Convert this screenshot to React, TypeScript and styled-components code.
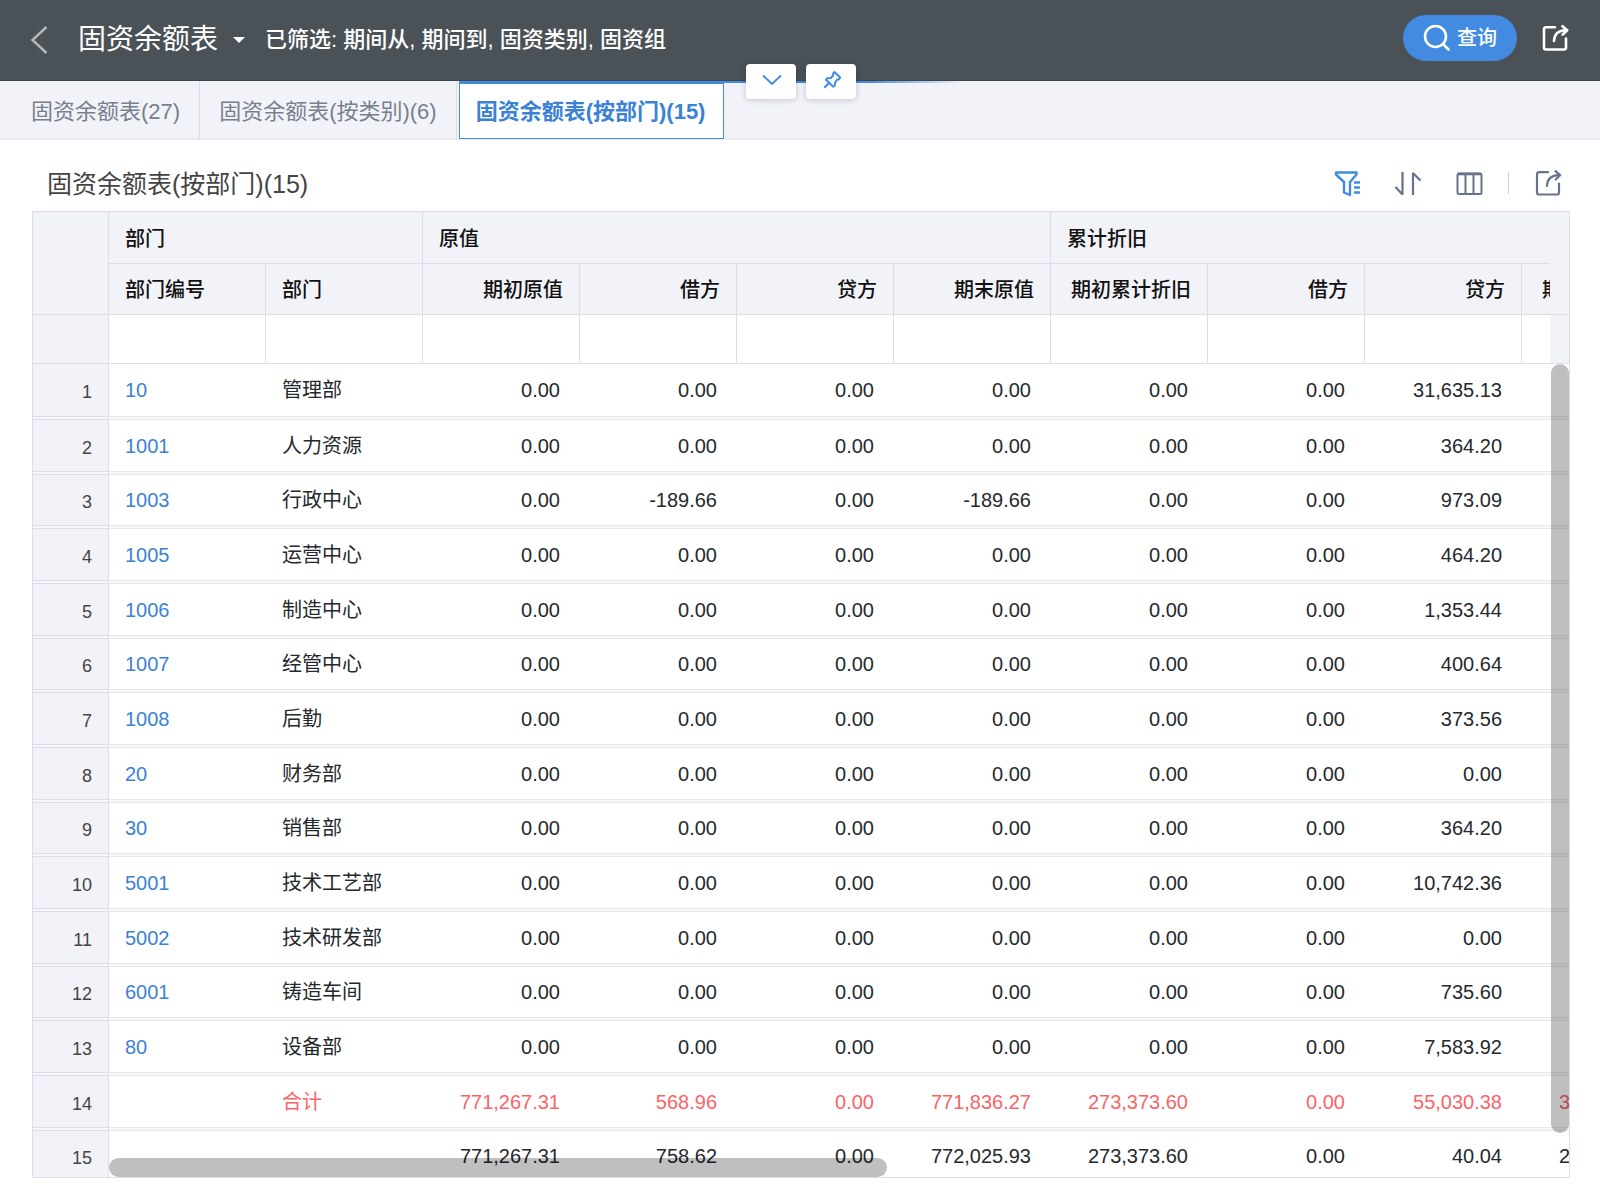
import React from 'react';
import styled, { createGlobalStyle, css } from 'styled-components';

const color = {
  bar: '#4a5157',
  blue: '#428be0',
  link: '#3b82d6',
  panel: '#f2f3f8',
  line: '#dcdde7',
  rowLine: '#e9e9ea',
  rowGap: '#f8f8f8',
  text: '#24292e',
  icon: '#66738a',
  red: '#fb6467',
};

const GlobalStyle = createGlobalStyle`
  * { box-sizing: border-box; }
  body {
    margin: 0;
    background: #fff;
    color: ${color.text};
    font-family: "Liberation Sans", "Noto Sans CJK SC", sans-serif;
    font-size: 20px;
  }
  button, input { font: inherit; color: inherit; }
`;

const Page = styled.div`
  display: flex;
  flex-direction: column;
  height: 100vh;
`;

const bareButton = css`
  display: inline-flex;
  align-items: center;
  justify-content: center;
  padding: 0;
  border: 0;
  background: none;
  cursor: pointer;
`;

const TopBar = styled.header`
  position: relative;
  display: flex;
  align-items: center;
  height: 81px;
  padding: 0 31px 0 30px;
  background: ${color.bar};
  border-bottom: 1px solid #3d444b;
  color: #fff;
  flex-shrink: 0;
`;

const BackButton = styled.button`
  ${bareButton}
  width: 20px;
  height: 28px;
  margin-right: 28px;
  color: #b3b7ba;
`;

const TitleButton = styled.button`
  ${bareButton}
  gap: 15px;
  font-size: 28px;
  line-height: 36px;
`;

const Title = styled.h1`
  margin: 0;
  font-size: 28px;
  font-weight: 400;
`;

const Caret = styled.span`
  border: 6px solid transparent;
  border-top-color: #fff;
  border-bottom-width: 0;
`;

const FilterSummary = styled.p`
  flex: 1;
  margin: 0 0 0 20px;
  font-size: 22px;
  line-height: 32px;
  font-weight: 500;
`;

const Actions = styled.div`
  display: flex;
  align-items: center;
  gap: 24px;
  padding-bottom: 4px;
`;

const QueryButton = styled.button`
  ${bareButton}
  gap: 6px;
  width: 114px;
  height: 46px;
  border-radius: 23px;
  background: ${color.blue};
  font-weight: 500;
`;

const QueryLabel = styled.span`
  padding-bottom: 3px;
`;

const IconButton = styled.button<{ $active?: boolean }>`
  ${bareButton}
  width: 28px;
  height: 28px;
  color: ${(p) => (p.$active ? color.blue : 'inherit')};
`;

const PanelHandles = styled.div`
  position: absolute;
  z-index: 2;
  bottom: -19px;
  left: calc(50% + 1px);
  display: flex;
  gap: 10px;
  transform: translateX(-50%);
`;

const Handle = styled.button`
  ${bareButton}
  width: 50px;
  height: 35px;
  padding: 0 0 4px 2px;
  border-radius: 4px;
  background: #fff;
  color: ${color.blue};
  box-shadow: 0 1px 6px rgba(0, 0, 0, 0.2);
`;

const Tabs = styled.nav`
  display: flex;
  height: 59px;
  background: ${color.panel};
  box-shadow: inset 0 -2px 2px #e9eaef;
  font-size: 22px;
  flex-shrink: 0;
  &::after {
    content: '';
    width: 240px;
    height: 2px;
    background: linear-gradient(to right, ${color.blue} 60%, transparent);
  }
`;

const Tab = styled.button<{ $active?: boolean; $first?: boolean }>`
  ${bareButton}
  padding: 0 19px 4px ${(p) => (p.$first ? 31 : 19)}px;
  border-right: 1px solid ${color.line};
  color: #76808f;
  white-space: nowrap;
  ${(p) =>
    p.$active &&
    css`
      margin: 0 0 1px 2px;
      padding: 0 18px 4px 16px;
      border: 1px solid ${color.blue};
      border-top-width: 3px;
      background: #fff;
      color: ${color.link};
      font-weight: 700;
    `}
`;

const Content = styled.main`
  display: flex;
  flex: 1;
  flex-direction: column;
  min-height: 0;
  padding: 0 30px 22px 32px;
`;

const SectionHead = styled.div`
  display: flex;
  align-items: center;
  height: 71px;
  padding: 16px 8px 0 15px;
  flex-shrink: 0;
`;

const SectionTitle = styled.h2`
  flex: 1;
  margin: 0;
  font-size: 25px;
  line-height: 36px;
  font-weight: 400;
  color: #444;
`;

const Tools = styled.div`
  display: flex;
  align-items: center;
  gap: 33px;
  padding-bottom: 2px;
  color: ${color.icon};
`;

const Divider = styled.span`
  width: 1px;
  height: 22px;
  margin: 0 -8px;
  background: #ccd0d6;
`;

const GridFrame = styled.section`
  position: relative;
  flex: 1;
  min-height: 0;
  overflow: hidden;
  border: 1px solid ${color.line};
`;

const Scroller = styled.div`
  height: 100%;
  overflow: auto;
  scrollbar-width: none;
`;

const Table = styled.table`
  width: 1646px;
  table-layout: fixed;
  border-collapse: separate;
  border-spacing: 0;
  th, td { padding: 0; }
`;

const NumberCol = styled.col`
  width: 76px;
`;

const HeadRow = styled.tr<{ $height: number }>`
  height: ${(p) => p.$height}px;
`;

const HeadCell = styled.th<{ $right?: boolean }>`
  && { padding: 2px 16px 0; }
  border-right: 1px solid ${color.line};
  border-bottom: 1px solid ${color.line};
  background: ${color.panel};
  font-weight: 500;
  line-height: 28px;
  text-align: ${(p) => (p.$right ? 'right' : 'left')};
  white-space: nowrap;
  color: #111;
`;

const FilterCell = styled.td`
  border-right: 1px solid ${color.line};
  border-bottom: 1px solid ${color.line};
`;

const FilterInput = styled.input`
  display: block;
  width: 100%;
  height: 48px;
  padding: 0 16px;
  border: 0;
  outline: 0;
  background: #fff;
`;

const BodyRow = styled.tr<{ $total?: boolean }>`
  height: 55px;
  color: ${(p) => (p.$total ? color.red : 'inherit')};
  &:first-child { height: 56px; }
  &:nth-child(3n) { height: 54px; }
`;

const RowNumber = styled.th`
  && { padding: 1px 16px 0 0; }
  border-right: 1px solid ${color.line};
  background: ${color.panel};
  box-shadow: inset 0 -1px ${color.line}, inset 0 -3px #f6f7fa, inset 0 -4px ${color.line};
  font-size: 18px;
  font-weight: 400;
  text-align: right;
  color: #444;
`;

const Cell = styled.td<{ $right?: boolean }>`
  && { padding: 0 ${(p) => (p.$right ? 20 : 16)}px 4px; }
  box-shadow: inset 0 -1px ${color.rowLine}, inset 0 -3px ${color.rowGap}, inset 0 -4px ${color.rowLine};
  line-height: 28px;
  text-align: ${(p) => (p.$right ? 'right' : 'left')};
  white-space: nowrap;
`;

const CodeLink = styled.a`
  color: ${color.link};
  text-decoration: none;
`;

const HeaderGutter = styled.div`
  position: absolute;
  top: 0;
  right: 0;
  width: 19px;
  height: 152px;
  border-bottom: 1px solid ${color.line};
  background: linear-gradient(${color.line}, ${color.line}) 0 102px / 100% 1px no-repeat ${color.panel};
`;

const VerticalThumb = styled.div`
  position: absolute;
  top: 152px;
  right: 0;
  bottom: 44px;
  width: 18px;
  border-radius: 9px;
  background: rgba(0, 0, 0, 0.25);
`;

const HorizontalThumb = styled.div`
  position: absolute;
  bottom: 0;
  left: 76px;
  width: calc(50% + 10px);
  height: 19px;
  border-radius: 10px;
  background: rgba(0, 0, 0, 0.25);
`;

const ExportIcon = ({ weight = 2.2 }: { weight?: number }) => (
  <svg width="28" height="28" viewBox="0 0 28 28" fill="none" stroke="currentColor" strokeWidth={weight} strokeLinecap="round" strokeLinejoin="round" aria-hidden="true">
    <path d="M14 3.200H5a2 2 0 0 0-2 2v18.300a2 2 0 0 0 2 2h18a2 2 0 0 0 2-2V14.500" />
    <path d="M13 17c.2-6.500 4-10.500 11.500-10.800" />
    <path d="M21.500 2.200l4.700 4-4.500 4.300" />
  </svg>
);

const FilterIcon = () => (
  <svg width="28" height="28" viewBox="0 0 28 28" fill="none" stroke="currentColor" strokeWidth="2.400" strokeLinejoin="round" aria-hidden="true">
    <path d="M3 3.500h20.500v2L17 13v13l-6-2.500V13L3 5.500z" />
    <path d="M21 13.500h6M21 18.500h6M21 23.500h6" />
  </svg>
);

const SortIcon = () => (
  <svg width="28" height="28" viewBox="0 0 28 28" fill="none" stroke="currentColor" strokeWidth="2.200" strokeLinejoin="bevel" aria-hidden="true">
    <path d="M8.500 3v22.500L1.500 18" />
    <path d="M19 26V4l7.500 7.500" />
  </svg>
);

const ColumnsIcon = () => (
  <svg width="28" height="28" viewBox="0 0 28 28" fill="none" stroke="currentColor" strokeWidth="2" aria-hidden="true">
    <rect x="2.500" y="4.500" width="24" height="20.500" rx="1.500" />
    <path d="M10.500 5v20M18.500 5v20" />
    <path d="M3 5h23" strokeWidth="2.600" />
  </svg>
);

const SearchIcon = () => (
  <svg width="28" height="28" viewBox="0 0 28 28" fill="none" stroke="currentColor" strokeWidth="2.600" strokeLinecap="round" aria-hidden="true">
    <circle cx="12.500" cy="12.500" r="10.500" />
    <path d="M20.500 20.500l5 5" />
  </svg>
);

const BackIcon = () => (
  <svg width="20" height="28" viewBox="0 0 20 28" fill="none" stroke="currentColor" strokeWidth="2.500" aria-hidden="true">
    <path d="M16.500 1L2.500 14l14 13" />
  </svg>
);

const ChevronIcon = () => (
  <svg width="20" height="12" viewBox="0 0 20 12" fill="none" stroke="currentColor" strokeWidth="1.900" aria-hidden="true">
    <path d="M1 1.500l9 8.500 9-8.500" />
  </svg>
);

const PinIcon = () => (
  <svg width="20" height="20" viewBox="0 0 20 20" fill="none" stroke="currentColor" strokeWidth="2" strokeLinejoin="round" aria-hidden="true">
    <path d="M12.500 2l5.700 5.500-1.700 2-1.500.3-2 3-.3 3-1.400 1L4 9.700l1.300-1.400 3.500-.3 2.200-2.500.2-2z" />
    <path d="M7 13l-4.800 4.800" />
  </svg>
);

const groups = [
  { name: '部门', span: 2 },
  { name: '原值', span: 4 },
  { name: '累计折旧', span: 4 },
];

const columns = [
  '部门编号', '部门', '期初原值', '借方', '贷方', '期末原值',
  '期初累计折旧', '借方', '贷方', '期末累计折旧',
];

const zero = '0.00';

const plainRow = (code: string, name: string, credit: string) => [
  code, name, zero, zero, zero, zero, zero, zero, credit, credit,
];

const rows: string[][] = [
  plainRow('10', '管理部', '31,635.13'),
  plainRow('1001', '人力资源', '364.20'),
  ['1003', '行政中心', zero, '-189.66', zero, '-189.66', zero, zero, '973.09', '973.09'],
  plainRow('1005', '运营中心', '464.20'),
  plainRow('1006', '制造中心', '1,353.44'),
  plainRow('1007', '经管中心', '400.64'),
  plainRow('1008', '后勤', '373.56'),
  plainRow('20', '财务部', '0.00'),
  plainRow('30', '销售部', '364.20'),
  plainRow('5001', '技术工艺部', '10,742.36'),
  plainRow('5002', '技术研发部', '0.00'),
  plainRow('6001', '铸造车间', '735.60'),
  plainRow('80', '设备部', '7,583.92'),
  ['', '合计', '771,267.31', '568.96', zero, '771,836.27', '273,373.60', zero, '55,030.38', '328,403.98'],
  ['', '', '771,267.31', '758.62', zero, '772,025.93', '273,373.60', zero, '40.04', '273,413.64'],
];

const BalanceTable = () => (
  <Table>
    <colgroup>
      <NumberCol />
      {columns.map((_, i) => <col key={i} />)}
    </colgroup>
    <thead>
      <HeadRow $height={52}>
        <HeadCell rowSpan={2} aria-label="行号" />
        {groups.map((g) => (
          <HeadCell key={g.name} colSpan={g.span} scope="colgroup">{g.name}</HeadCell>
        ))}
      </HeadRow>
      <HeadRow $height={51}>
        {columns.map((c, i) => (
          <HeadCell key={i} scope="col" $right={i > 1}>{c}</HeadCell>
        ))}
      </HeadRow>
      <HeadRow $height={49}>
        <HeadCell aria-label="筛选" />
        {columns.map((c, i) => (
          <FilterCell key={i}><FilterInput type="text" aria-label={c} /></FilterCell>
        ))}
      </HeadRow>
    </thead>
    <tbody>
      {rows.map((row, r) => (
        <BodyRow key={r} $total={row[1] === '合计'}>
          <RowNumber scope="row">{r + 1}</RowNumber>
          {row.map((value, i) => (
            <Cell key={i} $right={i > 1}>
              {i === 0 && value ? <CodeLink href={`#${value}`}>{value}</CodeLink> : value}
            </Cell>
          ))}
        </BodyRow>
      ))}
    </tbody>
  </Table>
);

export default function App() {
  return (
    <>
      <GlobalStyle />
      <Page>
        <TopBar>
          <BackButton aria-label="返回"><BackIcon /></BackButton>
          <TitleButton>
            <Title>固资余额表</Title>
            <Caret />
          </TitleButton>
          <FilterSummary>已筛选: 期间从, 期间到, 固资类别, 固资组</FilterSummary>
          <Actions>
            <QueryButton><SearchIcon /><QueryLabel>查询</QueryLabel></QueryButton>
            <IconButton aria-label="分享"><ExportIcon weight={2.6} /></IconButton>
          </Actions>
          <PanelHandles>
            <Handle aria-label="展开"><ChevronIcon /></Handle>
            <Handle aria-label="固定"><PinIcon /></Handle>
          </PanelHandles>
        </TopBar>
        <Tabs>
          <Tab $first>固资余额表(27)</Tab>
          <Tab>固资余额表(按类别)(6)</Tab>
          <Tab $active>固资余额表(按部门)(15)</Tab>
        </Tabs>
        <Content>
          <SectionHead>
            <SectionTitle>固资余额表(按部门)(15)</SectionTitle>
            <Tools>
              <IconButton $active aria-label="筛选"><FilterIcon /></IconButton>
              <IconButton aria-label="排序"><SortIcon /></IconButton>
              <IconButton aria-label="列设置"><ColumnsIcon /></IconButton>
              <Divider />
              <IconButton aria-label="导出"><ExportIcon /></IconButton>
            </Tools>
          </SectionHead>
          <GridFrame>
            <Scroller><BalanceTable /></Scroller>
            <HeaderGutter />
            <VerticalThumb />
            <HorizontalThumb />
          </GridFrame>
        </Content>
      </Page>
    </>
  );
}
